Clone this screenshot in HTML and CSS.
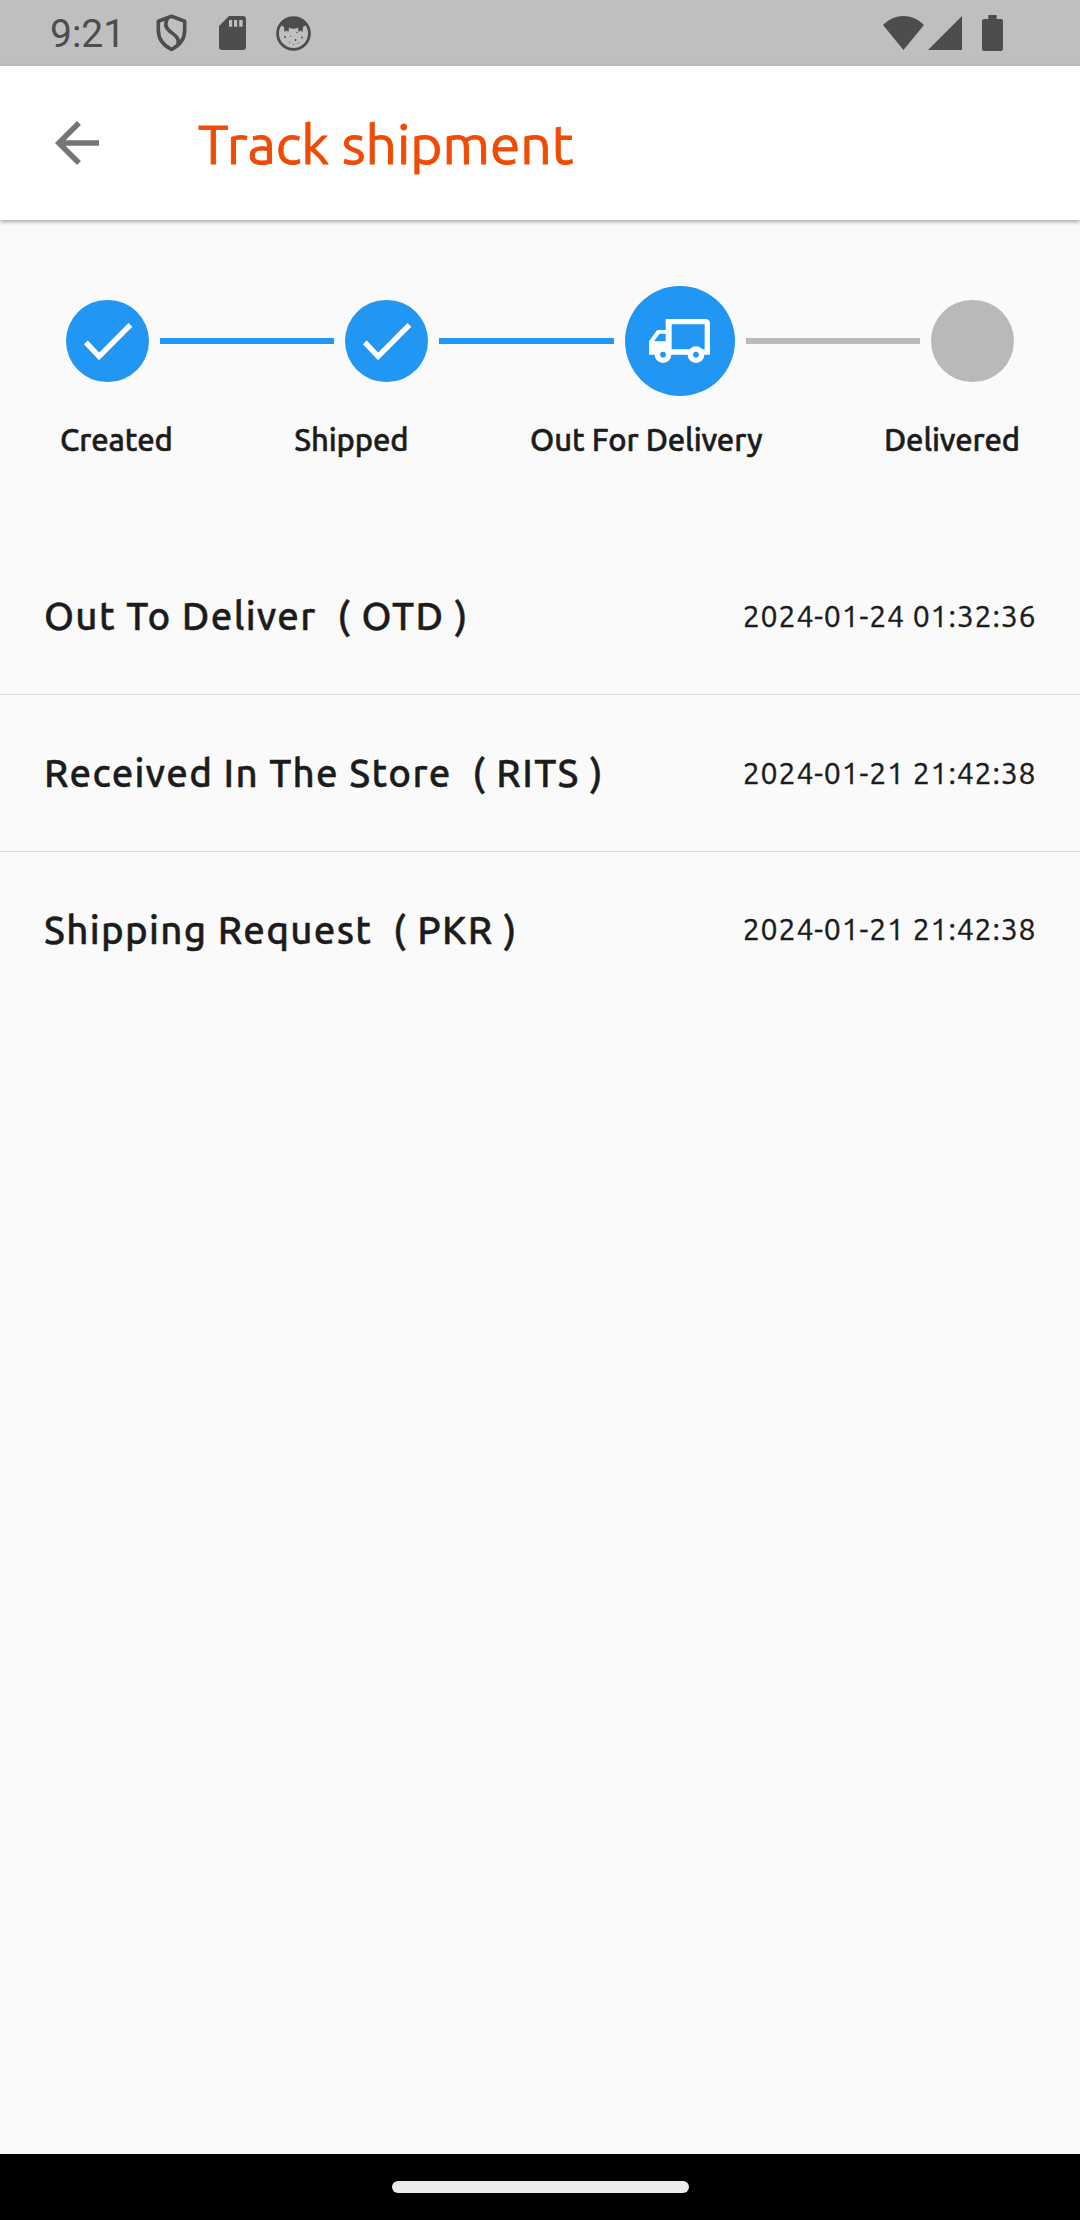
FILE: index.html
```html
<!DOCTYPE html>
<html lang="en">
<head>
    <meta charset="UTF-8">
    <meta name="viewport" content="width=device-width, initial-scale=1.0">
    <title>Track shipment</title>
    <link rel="stylesheet" href="styles.css">
</head>
<body>
    <div class="status-bar">
        <span class="clock">9:21</span>
        <div class="status-left">
            <svg class="icon-shield" viewBox="0 0 31 38" fill="none" stroke="#4d4d4d" stroke-width="3.6" stroke-linejoin="round">
                <path d="M15.5 2.3 L2.3 7.3 V16 C2.3 25.5 7.5 31.5 15.5 35.5 C23.5 31.5 28.7 25.5 28.7 16 V7.3 Z"/>
                <path d="M11.5 4.5 C9 9 9 13 13 16.5 C19 21.5 24 24 22 30.5"/>
            </svg>
            <svg class="icon-sd" viewBox="0 0 27 34">
                <path fill="#4d4d4d" d="M10 0 H24 a3 3 0 0 1 3 3 V31 a3 3 0 0 1-3 3 H3 a3 3 0 0 1-3-3 V10 Z"/>
                <path fill="#bfbfbf" d="M10 4h3.2v6.7H10z M15 4h3.2v6.7H15z M20.2 4h3.4v6.7h-3.4z"/>
            </svg>
            <svg class="icon-face" viewBox="0 0 35 35">
                <circle cx="17.5" cy="17.5" r="15.9" fill="none" stroke="#4d4d4d" stroke-width="2.8"/>
                <path fill="#4d4d4d" d="M5 9 C11 -1 24 -1 30 9 L27 11 L26.5 16 L24.5 14.5 L22.5 16 L22 11.5 Q17.5 14 13 11.5 L12.5 16 L10.5 14.5 L8.5 16 L8 11 Z"/>
                <g fill="#4d4d4d">
                    <circle cx="9" cy="21" r="1"/>
                    <circle cx="21" cy="16.5" r=".7"/>
                    <circle cx="26" cy="21.5" r=".9"/>
                    <circle cx="14.5" cy="20" r=".6"/>
                    <circle cx="19.5" cy="24" r=".9"/>
                    <circle cx="13.5" cy="26" r=".6"/>
                    <circle cx="22.5" cy="27" r=".6"/>
                    <circle cx="17.5" cy="28.5" r=".6"/>
                </g>
            </svg>
        </div>
        <div class="status-right">
            <svg class="icon-wifi" viewBox="0 0 41 34">
                <path d="M0 9 C12 -3 29 -3 41 9 L20.5 34 Z"/>
            </svg>
            <svg class="icon-signal" viewBox="0 0 34 34">
                <path d="M34 0 V34 H0 Z"/>
            </svg>
            <svg class="icon-battery" viewBox="0 0 21 36">
                <path d="M6.3 0 h8.4 v4 H19 a2 2 0 0 1 2 2 V34 a2 2 0 0 1-2 2 H2 a2 2 0 0 1-2-2 V6 a2 2 0 0 1 2-2 h4.3 z"/>
            </svg>
        </div>
    </div>

    <header class="app-bar">
        <svg class="back" viewBox="0 0 24 24">
            <path d="M20 11H7.83l5.59-5.59L12 4l-8 8 8 8 1.41-1.41L7.83 13H20v-2z"/>
        </svg>
        <h1>Track shipment</h1>
    </header>

    <main>
        <div class="stepper">
            <div class="step">
                <svg class="check" viewBox="0 0 82.5 82.5"><path d="M19.8 42.4 L33.1 56.4 L64.4 24.9"/></svg>
            </div>
            <div class="line"></div>
            <div class="step">
                <svg class="check" viewBox="0 0 82.5 82.5"><path d="M19.8 42.4 L33.1 56.4 L64.4 24.9"/></svg>
            </div>
            <div class="line"></div>
            <div class="step current">
                <svg class="truck" viewBox="88 117 183 133">
                    <path fill="#fff" fill-rule="evenodd" d="M138 117 H257 Q271 117 271 131 V224 H88 V184 L110 153 Q113 150 117 150 H138 Z M156 133 V208 H255 V133 Z M120 161 L103 184 H138 V161 Z"/>
                    <circle cx="130" cy="224" r="25" fill="#fff"/>
                    <circle cx="229" cy="224" r="25" fill="#fff"/>
                    <circle cx="130" cy="224" r="8.5" fill="#2196f3"/>
                    <circle cx="229" cy="224" r="8.5" fill="#2196f3"/>
                </svg>
            </div>
            <div class="line pending"></div>
            <div class="step pending"></div>
        </div>
        <div class="step-labels">
            <span>Created</span>
            <span>Shipped</span>
            <span>Out For Delivery</span>
            <span>Delivered</span>
        </div>

        <ul class="history">
            <li>
                <span class="event">Out To Deliver  ( OTD )</span>
                <span class="date">2024-01-24 01:32:36</span>
            </li>
            <li>
                <span class="event">Received In The Store  ( RITS )</span>
                <span class="date">2024-01-21 21:42:38</span>
            </li>
            <li>
                <span class="event">Shipping Request  ( PKR )</span>
                <span class="date">2024-01-21 21:42:38</span>
            </li>
        </ul>
    </main>

    <footer class="nav-bar">
        <div class="pill"></div>
    </footer>
</body>
</html>
```

FILE: styles.css
```css
* {
    margin: 0;
    padding: 0;
    box-sizing: border-box;
}

body {
    background: #fafafa;
    color: #1c1c1c;
    font-family: Ubuntu, "Noto Sans", sans-serif;
    height: 100vh;
    display: flex;
    flex-direction: column;
    overflow: hidden;
}

svg {
    display: block;
    flex-shrink: 0;
}

/* Android status bar */
.status-bar {
    height: 66px;
    background: #bfbfbf;
    display: flex;
    align-items: center;
    padding: 0 77px 0 50px;
    flex-shrink: 0;
}

.clock {
    font-family: Roboto, sans-serif;
    font-size: 39px;
    line-height: 66px;
    color: #4d4d4d;
    width: 106px;
    padding-top: 2px;
}

.status-left {
    display: flex;
    align-items: center;
}

.icon-shield {
    width: 31px;
    height: 38px;
    margin-right: 32px;
}

.icon-sd {
    width: 27px;
    height: 34px;
    margin-right: 30px;
}

.icon-face {
    width: 35px;
    height: 35px;
}

.status-right {
    display: flex;
    align-items: center;
    margin-left: auto;
    fill: #4d4d4d;
}

.icon-wifi {
    width: 41px;
    height: 34px;
    margin-right: 4px;
}

.icon-signal {
    width: 34px;
    height: 34px;
    margin-right: 20px;
}

.icon-battery {
    width: 21px;
    height: 36px;
}

.app-bar {
    height: 154px;
    background: #fff;
    display: flex;
    align-items: center;
    padding-left: 44px;
    box-shadow: 0 2px 4px rgba(0, 0, 0, 0.32);
    flex-shrink: 0;
}

.back {
    width: 66px;
    height: 66px;
    fill: #757575;
    margin-right: 88px;
}

.app-bar h1 {
    font-size: 55px;
    font-weight: 400;
    padding-top: 1px;
    color: #f04b05;
    -webkit-text-stroke: 0.9px #f04b05;
}

main {
    flex: 1;
}

/* Progress */
.stepper {
    display: flex;
    align-items: center;
    gap: 11px;
    height: 110px;
    margin: 66px 66px 0;
}

.step {
    width: 82.5px;
    height: 82.5px;
    border-radius: 50%;
    background: #2196f3;
    display: flex;
    align-items: center;
    justify-content: center;
    flex-shrink: 0;
}

.step.current {
    width: 110px;
    height: 110px;
}

.line {
    flex: 1;
    height: 6px;
    background: #2196f3;
}

.step.pending,
.line.pending {
    background: #b9b9b9;
}

.check {
    width: 82.5px;
    height: 82.5px;
    fill: none;
    stroke: #fff;
    stroke-width: 5.4;
}

.truck {
    width: 61px;
    height: 44.3px;
}

.step-labels {
    display: flex;
    justify-content: space-between;
    margin-top: 24px;
    padding: 0 60px;
    font-size: 31px;
    font-weight: 500;
    line-height: 40px;
    letter-spacing: -0.1px;
    -webkit-text-stroke: 0.5px #1c1c1c;
}

/* Events */
.history {
    list-style: none;
    margin-top: 78px;
}

.history li {
    height: 157px;
    display: flex;
    align-items: center;
    justify-content: space-between;
    padding: 0 43.5px 1px 44px;
    border-bottom: 1px solid #dedede;
}

.history li:last-child {
    border-bottom: none;
    padding-bottom: 3px;
}

.event {
    font-size: 38.5px;
    font-weight: 500;
    letter-spacing: 1.3px;
    white-space: pre;
    -webkit-text-stroke: 0.4px #1c1c1c;
}

.date {
    font-size: 30.3px;
    letter-spacing: 0.8px;
    -webkit-text-stroke: 0.4px #1c1c1c;
}

.nav-bar {
    height: 66px;
    background: #000;
    display: flex;
    align-items: center;
    justify-content: center;
    flex-shrink: 0;
}

.pill {
    width: 297px;
    height: 12px;
    border-radius: 6px;
    background: #ebebeb;
}
```
